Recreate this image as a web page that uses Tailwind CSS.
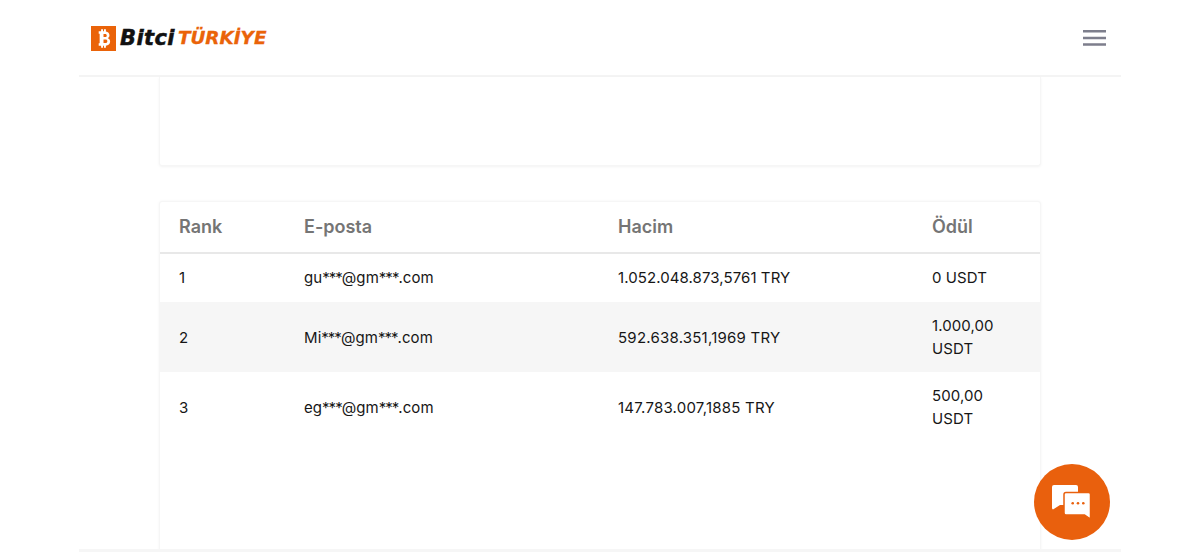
<!DOCTYPE html>
<html><head><meta charset="utf-8"><script src="https://cdn.jsdelivr.net/npm/@tailwindcss/browser@4"></script></head>
<body class="bg-white font-['Inter',sans-serif] overflow-hidden">
<div class="relative w-[1200px] h-[552px] overflow-hidden px-[79px]">
  <header class="h-[77px] flex items-center justify-between border-b-2 border-[#f4f4f4] pl-[12px] pr-[15px] pt-[1px]">
    <div class="flex items-center">
      <svg width="25" height="25" viewBox="0 0 26 26" class="mr-[4px]"><rect width="26" height="26" fill="#ea6309"/><path fill="#fff" fill-rule="evenodd" d="M8 5.500h2.500v-2h2v2h1v-2h2v2.300c2.400.5 3.700 1.900 3.700 3.900 0 1.300-.6 2.400-1.700 3 1.500.6 2.400 1.900 2.400 3.400 0 2.600-2 4.200-4.400 4.400v2h-2v-2h-1v2h-2v-2H8v-2.500h1V8H8zm5 2.800v3.200h1.800c1 0 1.600-.6 1.600-1.600s-.6-1.600-1.600-1.600zm0 5.700v3.700h2.200c1.100 0 1.800-.8 1.800-1.900s-.7-1.800-1.800-1.800z"/></svg>
      <span class="font-['DejaVu_Sans',sans-serif] text-[21px] leading-none font-bold italic text-[#111] tracking-[0.4px] [-webkit-text-stroke:0.5px_#111]">Bitci</span>
      <span class="ml-[3px] font-['DejaVu_Sans',sans-serif] text-[18.400px] leading-none font-bold italic text-[#ea6309] [-webkit-text-stroke:0.3px_#ea6309]">TÜRKİYE</span>
    </div>
    <svg width="23" height="16" viewBox="0 0 23 16"><path fill="#7d7e8c" d="M0 0h23v2.500H0zM0 6.700h23v2.500H0zM0 13.300h23v2.500H0z"/></svg>
  </header>
  <main class="mx-[80px] flex flex-col gap-[35px]">
    <div class="h-[89px] bg-white border border-t-0 border-[#f6f6f6] rounded-b-[3px] shadow-[0_1px_3px_rgba(0,0,0,0.05)]"></div>
    <div class="h-[360px] bg-white border border-[#f6f6f6] rounded-[3px] shadow-[0_0_3px_rgba(0,0,0,0.05)]">
      <table class="w-full table-fixed border-collapse text-[15px] leading-[23px] tracking-[0.08px] text-[#161616]">
        <colgroup><col class="w-[125px]"><col class="w-[314px]"><col class="w-[314px]"><col></colgroup>
        <thead>
          <tr class="h-[51px] border-b-2 border-[#e8e8e8] text-left text-[18px] tracking-normal text-[#757575]">
            <th class="pl-[19px] pb-[2px] font-semibold">Rank</th><th class="pl-[19px] pb-[2px] font-semibold">E-posta</th><th class="pl-[19px] pb-[2px] font-semibold">Hacim</th><th class="pl-[19px] pb-[2px] font-semibold">Ödül</th>
          </tr>
        </thead>
        <tbody>
          <tr class="h-[49px]"><td class="pl-[19px] pb-[1px]">1</td><td class="pl-[19px] pb-[1px]">gu<span class="tracking-[-1px]">***</span>@gm<span class="tracking-[-1px]">***</span>.com</td><td class="pl-[19px] pb-[1px]">1.052.048.873,5761 TRY</td><td class="pl-[19px] pb-[1px]">0 USDT</td></tr>
          <tr class="h-[70px] bg-[#f6f6f6]"><td class="pl-[19px]">2</td><td class="pl-[19px]">Mi<span class="tracking-[-1px]">***</span>@gm<span class="tracking-[-1px]">***</span>.com</td><td class="pl-[19px] tracking-[0.23px]">592.638.351,1969 TRY</td><td class="pl-[19px] pr-[19px]">1.000,00 USDT</td></tr>
          <tr class="h-[70px]"><td class="pl-[19px]">3</td><td class="pl-[19px]">eg<span class="tracking-[-1px]">***</span>@gm<span class="tracking-[-1px]">***</span>.com</td><td class="pl-[19px] tracking-[0.23px]">147.783.007,1885 TRY</td><td class="pl-[19px] pr-[19px]">500,00 USDT</td></tr>
        </tbody>
      </table>
    </div>
  </main>
  <div class="absolute left-[79px] right-[79px] top-[549px] h-[3px] bg-[#f6f6f6]"></div>
  <button class="absolute left-[1034px] top-[464px] w-[76px] h-[76px] rounded-full bg-[#e9600d] flex items-center justify-center">
    <svg width="40" height="35" viewBox="0 0 40 35" class="mt-[1px]"><path fill="#fff" d="M2 0h22a2 2 0 0 1 2 2v18H8l-7 4.500a2 2 0 0 1-1-1.500V2a2 2 0 0 1 2-2z"/><path fill="#fff" stroke="#e9600d" stroke-width="1.500" d="M14 7.500h22.500a2 2 0 0 1 2 2V34l-6-4H14a2 2 0 0 1-2-2V9.500a2 2 0 0 1 2-2z"/><circle cx="20.700" cy="18.300" r="1.300" fill="#e9600d"/><circle cx="26" cy="18.300" r="1.300" fill="#e9600d"/><circle cx="31.300" cy="18.300" r="1.300" fill="#e9600d"/></svg>
  </button>
</div>
</body></html>
